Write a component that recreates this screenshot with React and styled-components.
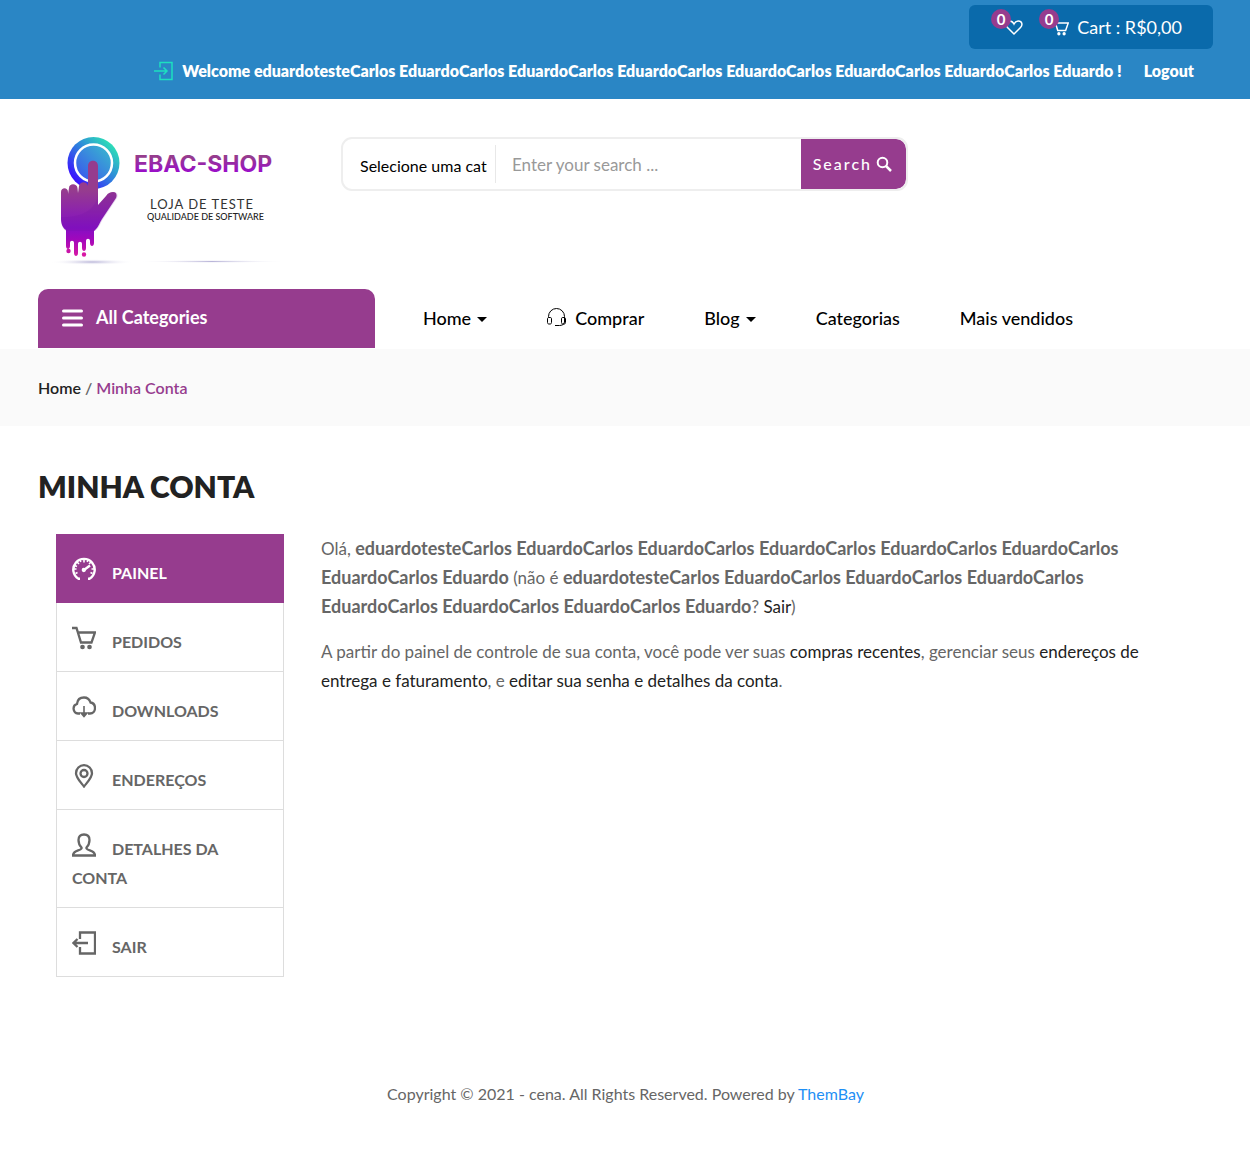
import React from "react";
import styled, { createGlobalStyle, css } from "styled-components";

const purple = "#963c8e";

const GlobalStyle = createGlobalStyle`
  *, *::before, *::after { box-sizing: border-box; }
  body {
    margin: 0;
    background: #fff;
    color: #666;
    font-family: Lato, "Liberation Sans", sans-serif;
    font-size: 16px;
    line-height: 30px;
  }
  a { color: inherit; text-decoration: none; }
`;

const container = css`
  width: 100%;
  padding-left: 38px;
  padding-right: 37px;
`;

/* Top bar */
const TopBar = styled.div`
  ${container}
  display: flex;
  flex-direction: column;
  align-items: flex-end;
  gap: 7px;
  padding-top: 5px;
  padding-bottom: 13px;
  background: #2a86c5;
  color: #fff;
`;

const CartBox = styled.div`
  display: flex;
  align-items: center;
  gap: 28px;
  height: 44px;
  padding: 0 31px 0 34px;
  border-radius: 6px;
  background: #0a6aab;
`;

const CartLink = styled.a`
  position: relative;
  display: flex;
  align-items: center;
  gap: 8px;
  height: 30px;
  font-size: 18px;
`;

const Count = styled.span`
  position: absolute;
  top: -3px;
  left: -12px;
  width: 20px;
  height: 20px;
  border-radius: 50%;
  background: ${purple};
  font-size: 15px;
  font-weight: 700;
  line-height: 20px;
  text-align: center;
`;

const Account = styled.div`
  display: flex;
  align-items: center;
  padding-right: 19px;
  font-weight: 800;
`;

const Welcome = styled.span`
  margin: 0 22px 0 8px;
`;

const Icon = styled.svg`
  flex: none;
  display: block;
  width: ${(p) => p.$size}px;
  height: ${(p) => p.$size}px;
  fill: none;
  stroke: currentColor;
  stroke-width: ${(p) => p.$stroke || 2};
`;

/* Masthead */
const Masthead = styled.header`
  ${container}
  display: flex;
  align-items: flex-start;
  gap: 43px;
  padding-top: 30px;
  padding-bottom: 10px;
`;

const Logo = styled.svg`
  flex: none;
  display: block;
  width: 260px;
  height: 150px;
`;

const SearchForm = styled.form`
  display: flex;
  flex: 0 1 567px;
  height: 54px;
  margin-top: 8px;
  border: 2px solid #eee;
  border-radius: 11px;
  overflow: hidden;
`;

const Category = styled.select`
  appearance: none;
  width: 153px;
  margin: 6px 0;
  padding: 2px 8px 0 17px;
  border: 0;
  border-right: 1px solid #e8e8e8;
  background: transparent;
  color: #000;
  font: 16px Lato, sans-serif;
  text-overflow: clip;
`;

const SearchInput = styled.input`
  flex: 1;
  min-width: 0;
  padding: 0 16px;
  border: 0;
  background: transparent;
  font: 17px Lato, sans-serif;
  &::placeholder { color: #999; opacity: 1; }
`;

const SearchButton = styled.button`
  display: flex;
  align-items: center;
  gap: 4px;
  padding: 0 14px 2px 12px;
  border: 0;
  border-radius: 0 10px 10px 0;
  background: ${purple};
  color: #fff;
  font: 500 16px Lato, sans-serif;
  letter-spacing: 2px;

  svg { margin-top: 2px; }
`;

/* Navigation */
const NavRow = styled.div`
  ${container}
  display: flex;
  align-items: stretch;
  padding-bottom: 1px;
`;

const AllCategories = styled.button`
  display: flex;
  align-items: center;
  gap: 13px;
  width: 337px;
  height: 59px;
  padding: 0 24px 3px;
  border: 0;
  border-radius: 10px 10px 0 0;
  background: ${purple};
  color: #fff;
  font: 700 18px Lato, sans-serif;
`;

const Nav = styled.nav`
  display: flex;
  align-items: center;
  gap: 60px;
  padding: 0 0 2px 48px;
`;

const NavLink = styled.a`
  display: flex;
  align-items: center;
  gap: ${(p) => (p.$icon ? 9 : 6)}px;
  color: #000;
  font-size: 18px;
  font-weight: 500;
`;

const Caret = styled.span`
  margin-top: 4px;
  border: 5px solid transparent;
  border-top-color: #000;
  border-bottom: 0;
`;

const Breadcrumb = styled.nav`
  ${container}
  padding-top: 24px;
  padding-bottom: 23px;
  background: #fafafa;
  font-weight: 600;
`;

const CrumbHome = styled.a`
  color: #222;
`;

const CrumbCurrent = styled.span`
  color: ${purple};
`;

/* Account page */
const Main = styled.main`
  ${container}
`;

const Title = styled.h1`
  margin: 40px 0 28px;
  color: #222;
  font-size: 30px;
  font-weight: 800;
  line-height: 40px;
`;

const Columns = styled.div`
  display: flex;
  align-items: flex-start;
  gap: 37px;
  padding: 0 18px;
`;

const Menu = styled.nav`
  flex: none;
  width: 228px;
  border: 1px solid #ddd;
  border-top: 0;
`;

const MenuLink = styled.a`
  display: block;
  margin: 0 ${(p) => (p.$active ? "-1px" : 0)};
  padding: 23px ${(p) => (p.$active ? 16 : 15)}px 15px;
  border-bottom: 1px solid ${(p) => (p.$active ? purple : "#ddd")};
  background: ${(p) => (p.$active ? purple : "transparent")};
  color: ${(p) => (p.$active ? "#fff" : "#666")};
  font-weight: 700;
  line-height: 29px;
  text-transform: uppercase;

  &:last-child { border-bottom: 0; }

  svg {
    display: inline-block;
    margin-right: 16px;
    vertical-align: -2px;
  }
`;

const Content = styled.section`
  flex: 1;
  min-width: 0;
  font-size: 17px;
  line-height: 29px;

  p { margin: 0 0 16px; }
  strong { font-size: 18px; }
  a { color: #222; }
`;

const Footer = styled.footer`
  ${container}
  padding-top: 102px;
  padding-bottom: 42px;
  text-align: center;

  a { color: #1e8ff5; }
`;

const fullName = "eduardotesteCarlos" + " EduardoCarlos".repeat(6) + " Eduardo";

function CartGlyph() {
  return (
    <>
      <path d="M0 2h4.500l4.500 14.500h10.500L23 6.500H6.500" />
      <circle cx="10.500" cy="21" r="1.200" fill="currentColor" />
      <circle cx="17.500" cy="21" r="1.200" fill="currentColor" />
    </>
  );
}

function Brand() {
  return (
    <Logo viewBox="38 129 260 150" role="img" aria-label="EBAC-SHOP Loja de Teste">
      <defs>
        <linearGradient id="ring" x1="0" y1="1" x2="1" y2="0">
          <stop offset="0.150" stopColor="#3a10ff" />
          <stop offset="0.500" stopColor="#2f7be0" />
          <stop offset="0.850" stopColor="#2cdcb8" />
        </linearGradient>
        <linearGradient id="disc" x1="0" y1="1" x2="1" y2="0">
          <stop offset="0" stopColor="#3a4df0" />
          <stop offset="1" stopColor="#38c0cc" />
        </linearGradient>
        <linearGradient id="hand" gradientUnits="userSpaceOnUse" x1="0" y1="162" x2="0" y2="256">
          <stop offset="0.300" stopColor="#963c8e" />
          <stop offset="0.700" stopColor="#8410c4" />
          <stop offset="0.820" stopColor="#a008bc" />
          <stop offset="1" stopColor="#d818a4" />
        </linearGradient>
        <linearGradient id="word" x1="0" y1="0" x2="0" y2="1">
          <stop offset="0.250" stopColor="#963c8e" />
          <stop offset="0.850" stopColor="#9a08d0" />
        </linearGradient>
        <radialGradient id="shadow">
          <stop offset="0" stopColor="#b8b4d8" />
          <stop offset="1" stopColor="#fff" stopOpacity="0" />
        </radialGradient>
      </defs>
      <ellipse cx="92" cy="262" rx="42" ry="3" fill="url(#shadow)" />
      <ellipse cx="212" cy="261.500" rx="74" ry="1.500" fill="url(#shadow)" />
      <circle cx="93.500" cy="163" r="26" fill="url(#ring)" />
      <circle cx="93.500" cy="163" r="18.500" fill="url(#disc)" stroke="#fff" strokeWidth="2.500" />
      <path
        fill="url(#hand)"
        d="M61 192c0-5 7-5 7 0v2l1-6c0-5 8-5 8.500 0l.5 5 1-7c1-5 8-5 9 0V166c0-7 10-7 10 0v39l8-9c2-3 4-4 7-4 4 0 4 4 3 6l-14 21c-3 5-4 9-8 12v12c0 4-4 4-4 0v-2c0-3-4-3-4 0v7c0 4-4 4-4 0v-4c0-3-4-3-4 0v9c0 4-4 4-4 0v-10c0-3-4-3-4 0v3c0 4-4 4-4 0v-16c-3-2-5-6-5-11z"
      />
      <path fill="#7010a0" opacity="0.180" d="M61 217c18 1 36-6 37-24v12l9-9c2-3 4-4 7-4 4 0 4 4 3 6l-14 21c-3 5-4 9-8 12H66c-3-2-5-6-5-13z" />
      <circle cx="68.500" cy="251" r="2.200" fill="#c814a8" />
      <circle cx="84" cy="254.500" r="2.200" fill="#d818a4" />
      <text x="134" y="172" fill="url(#word)" fontFamily="Inter, sans-serif" fontSize="23" fontWeight="700">EBAC-SHOP</text>
      <text x="150" y="209" fill="#333" fontFamily="Lato, sans-serif" fontSize="13" letterSpacing="1">LOJA DE TESTE</text>
      <text x="147" y="220" fill="#222" fontFamily="Lato, sans-serif" fontSize="9" fontWeight="500">QUALIDADE DE SOFTWARE</text>
    </Logo>
  );
}

const menu = [
  {
    label: "Painel",
    active: true,
    icon: (
      <>
        <path strokeWidth="2.400" d="M8 21.800H6.500A10.700 10.700 0 1 1 17.500 21.800H16" />
        <path strokeWidth="1.600" d="M12 2v3.500M5 5l2 2M19 5l-2 2M2 12h2.500M22 12h-2.500M8 3l.8 2M16 3l-.8 2M2.500 8.500l2.500 1M3.500 16.500l2-1M20.500 16.500l-2-1" />
        <path strokeWidth="2.400" d="M12 13l6-4.500" />
        <circle cx="11.800" cy="13" r="1" fill="currentColor" />
      </>
    ),
  },
  { label: "Pedidos", icon: <CartGlyph /> },
  {
    label: "Downloads",
    icon: (
      <>
        <path d="M8 18.500H6a5 5 0 0 1-1-9.700C5.500 4.500 8.500 2.500 12 2.500s5.500 2 6.500 5c3 .5 4.500 2.800 4.500 5.500 0 3-2 5.500-5 5.500h-2" />
        <path d="M12 11v10M9 18l3 3.500 3-3.500z" fill="currentColor" strokeWidth="1.600" />
      </>
    ),
  },
  {
    label: "Endereços",
    icon: (
      <>
        <path d="M12 22.500C8 17.500 4 13.500 4 9.200a8 8 0 0 1 16 0C20 13.500 16 17.500 12 22.500z" />
        <circle cx="12" cy="9.500" r="3.500" />
      </>
    ),
  },
  {
    label: "Detalhes da conta",
    icon: <path d="M9.500 14.500C7.500 12.500 6.500 10 6.500 7c0-3.500 2-5.500 5.500-5.500s5.500 2 5.500 5.500c0 3-1 5.500-3 7.500v1c1.500 2.500 8.500 1.500 8.500 7H1c0-5.500 7-4.500 8.500-7z" />,
  },
  {
    label: "Sair",
    icon: <path d="M8 8V1.500h15v21H8V16M16 12H1.500M5.500 8L1.500 12l4 4" />,
  },
];

export default function App() {
  return (
    <>
      <GlobalStyle />
      <TopBar>
        <CartBox>
          <CartLink href="#wishlist" aria-label="Wishlist">
            <Icon $size={20} $stroke={1.500} viewBox="0 0 20 20">
              <path d="M11 17L4.500 10.500C2 8 3 4 6.500 4c2 0 3.500 1 4.500 3 1-2 2.500-3 4.500-3C19 4 20 8 17.500 10.500z" />
            </Icon>
            <Count>0</Count>
          </CartLink>
          <CartLink href="#cart">
            <Icon $size={18} viewBox="0 0 24 24"><CartGlyph /></Icon>
            <Count>0</Count>
            <span>Cart : R$0,00</span>
          </CartLink>
        </CartBox>
        <Account>
          <Icon $size={20} $stroke={1.500} viewBox="0 0 20 20" color="#1de0c0">
            <path d="M6 6.500V1.500h12v17H6v-5M0 10h13M9.500 6.500L13 10l-3.500 3.500" />
          </Icon>
          <Welcome>Welcome {fullName} !</Welcome>
          <a href="#logout">Logout</a>
        </Account>
      </TopBar>

      <Masthead>
        <a href="#home"><Brand /></a>
        <SearchForm>
          <Category aria-label="Categoria">
            <option>Selecione uma categoria</option>
          </Category>
          <SearchInput type="text" aria-label="Search" placeholder="Enter your search ..." />
          <SearchButton type="button">
            Search
            <Icon $size={16} $stroke={2} viewBox="0 0 16 16">
              <circle cx="6.500" cy="6.500" r="4.800" />
              <path d="M10 10l5 5" strokeWidth="2.500" />
            </Icon>
          </SearchButton>
        </SearchForm>
      </Masthead>

      <NavRow>
        <AllCategories type="button">
          <Icon $size={21} $stroke={3} viewBox="0 0 21 21" strokeLinecap="round">
            <path d="M1.500 4h18M1.500 11h18M1.500 18h18" />
          </Icon>
          All Categories
        </AllCategories>
        <Nav>
          <NavLink href="#home">Home <Caret /></NavLink>
          <NavLink href="#comprar" $icon>
            <Icon $size={19} $stroke={1} viewBox="0 0 19 19">
              <path d="M1.500 9.500V8.500a8 8 0 0 1 16 0V14c0 2.500-3 3.500-5 3.500M8 17.500h4.500M1.500 9.500H3c1.300 0 1.500.5 1.500 1.500v3.500c0 1-.5 1.500-1.500 1.500H2c-1 0-1.500-.5-1.500-1.500V11c0-1 .5-1.500 1-1.500zM17.500 9.500H16c-1.300 0-1.500.5-1.500 1.500v3.500c0 1 .5 1.500 1.500 1.500h1c1 0 1.500-.5 1.500-1.500V11c0-1-.5-1.500-1-1.500z" />
            </Icon>
            Comprar
          </NavLink>
          <NavLink href="#blog">Blog <Caret /></NavLink>
          <NavLink href="#categorias">Categorias</NavLink>
          <NavLink href="#mais-vendidos">Mais vendidos</NavLink>
        </Nav>
      </NavRow>

      <Breadcrumb aria-label="Breadcrumb">
        <CrumbHome href="#home">Home</CrumbHome> / <CrumbCurrent>Minha Conta</CrumbCurrent>
      </Breadcrumb>

      <Main>
        <Title>MINHA CONTA</Title>
        <Columns>
          <Menu aria-label="Minha conta">
            {menu.map((item) => (
              <MenuLink key={item.label} href="#conta" $active={item.active}>
                <Icon $size={24} $stroke={2.300} viewBox="0 0 24 24">{item.icon}</Icon>
                {item.label}
              </MenuLink>
            ))}
          </Menu>
          <Content>
            <p>
              Olá, <strong>{fullName}</strong> (não é <strong>{fullName}</strong>? <a href="#sair">Sair</a>)
            </p>
            <p>
              A partir do painel de controle de sua conta, você pode ver suas{" "}
              <a href="#compras">compras recentes</a>, gerenciar seus{" "}
              <a href="#enderecos">endereços de entrega e faturamento</a>, e{" "}
              <a href="#detalhes">editar sua senha e detalhes da conta</a>.
            </p>
          </Content>
        </Columns>
      </Main>

      <Footer>
        Copyright © 2021 - cena. All Rights Reserved. Powered by <a href="#thembay">ThemBay</a>
      </Footer>
    </>
  );
}
